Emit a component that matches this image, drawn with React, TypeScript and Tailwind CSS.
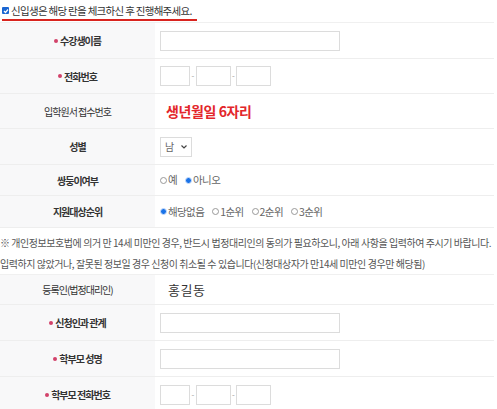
import React from "react";

const font = { fontFamily: '"Noto Sans CJK KR", "Noto Sans", sans-serif' };

function Label({ children, req, bold = true }: { children: React.ReactNode; req?: boolean; bold?: boolean }) {
  return (
    <div
      className={
        "bg-[#f8f8f9] flex items-center justify-center text-[10px] tracking-[-1px] text-[#333] " +
        (bold ? "font-bold" : "font-normal")
      }
    >
      {req && <span className="w-[4px] h-[4px] rounded-full bg-[#d2426a] mr-[2px]" />}
      {children}
    </div>
  );
}

function Row({ h, children, label }: { h: string; children?: React.ReactNode; label: React.ReactNode }) {
  return (
    <div className={"grid grid-cols-[155px_1fr] border-b border-[#eeeeee] " + h}>
      {label}
      <div className="flex items-center pl-[5px]">{children}</div>
    </div>
  );
}

const TextInput = () => <div className="w-[180px] h-[20px] border border-[#dcdcdc] bg-white" />;

const Phone = () => (
  <div className="flex items-center">
    <div className="w-[30px] h-[20px] border border-[#dcdcdc]" />
    <span className="text-[8px] text-[#999] w-[6px] text-center">-</span>
    <div className="w-[35px] h-[20px] border border-[#dcdcdc]" />
    <span className="text-[8px] text-[#999] w-[5px] text-center">-</span>
    <div className="w-[35px] h-[20px] border border-[#dcdcdc]" />
  </div>
);

function Radio({ on, label }: { on?: boolean; label: string }) {
  return (
    <span className="flex items-center mr-[8px]">
      <span
        className={
          "w-[7px] h-[7px] rounded-full mr-[1px] " +
          (on ? "bg-[#1a73e8] border border-[#cfe0fb]" : "border border-[#999]")
        }
      />
      <span className="text-[10.5px] tracking-[-0.6px] text-[#666]">{label}</span>
    </span>
  );
}

export default function App() {
  return (
    <div className="w-[497px] h-[409px] overflow-hidden bg-white" style={font}>
      <div className="flex pt-[2px] pl-[2px] h-[21px]">
        <div className="flex items-center h-[19px] border-b-2 border-[#d9241f] pr-[5px]">
          <span className="w-[7px] h-[7px] bg-[#1a66d2] rounded-[1px] flex items-center justify-center mr-[2px]">
            <svg width="6" height="6" viewBox="0 0 6 6">
              <path d="M1 3 L2.5 4.5 L5 1.5" stroke="white" strokeWidth="1.2" fill="none" />
            </svg>
          </span>
          <span className="text-[10.5px] tracking-[-0.7px] text-[#333] leading-[14px]">
            신입생은 해당 란을 체크하신 후 진행해주세요.
          </span>
        </div>
      </div>

      <div className="mt-[1px] mr-[3px] border-t border-[#f0f0f0]">
        <Row h="h-[36px]" label={<Label req>수강생이름</Label>}>
          <TextInput />
        </Row>
        <Row h="h-[35px]" label={<Label req>전화번호</Label>}>
          <Phone />
        </Row>
        <Row h="h-[35px]" label={<Label bold={false}>입학원서 접수번호</Label>}>
          <span className="ml-[6px] text-[14px] font-bold tracking-[-0.4px] text-[#e3262b]">생년월일 6자리</span>
        </Row>
        <Row h="h-[36px]" label={<Label>성별</Label>}>
          <div className="w-[32px] h-[20px] border border-[#dcdcdc] flex items-center justify-between px-[4px]">
            <span className="text-[10px] text-[#666]">남</span>
            <svg width="6" height="4" viewBox="0 0 6 4">
              <path d="M0.5 0.5 L3 3 L5.5 0.5" stroke="#444" strokeWidth="1.2" fill="none" />
            </svg>
          </div>
        </Row>
        <Row h="h-[31px]" label={<Label>쌍둥이여부</Label>}>
          <Radio label="예" />
          <Radio on label="아니오" />
        </Row>
        <Row h="h-[32px]" label={<Label>지원대상순위</Label>}>
          <Radio on label="해당없음" />
          <Radio label="1순위" />
          <Radio label="2순위" />
          <Radio label="3순위" />
        </Row>
      </div>

      <div className="pt-[4px] text-[10px] tracking-[-0.45px] leading-[21px] text-[#555] whitespace-nowrap">
        <p>※ 개인정보보호법에 의거 만 14세 미만인 경우, 반드시 법정대리인의 동의가 필요하오니, 아래 사항을 입력하여 주시기 바랍니다.</p>
        <p>입력하지 않았거나, 잘못된 정보일 경우 신청이 취소될 수 있습니다(신청대상자가 만14세 미만인 경우만 해당됨)</p>
      </div>

      <div className="mr-[3px] border-t border-[#f0f0f0]">
        <Row h="h-[30px]" label={<Label bold={false}>등록인(법정대리인)</Label>}>
          <span className="ml-[8px] text-[13px] tracking-[0.5px] text-[#333]">홍길동</span>
        </Row>
        <Row h="h-[36px]" label={<Label req>신청인과 관계</Label>}>
          <TextInput />
        </Row>
        <Row h="h-[36px]" label={<Label req>학부모 성명</Label>}>
          <TextInput />
        </Row>
        <Row h="h-[36px]" label={<Label req>학부모 전화번호</Label>}>
          <Phone />
        </Row>
      </div>
    </div>
  );
}
